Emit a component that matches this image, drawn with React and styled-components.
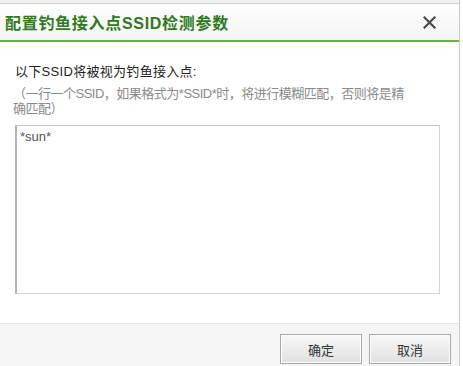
import React from "react";
import styled, { createGlobalStyle } from "styled-components";

const GlobalStyle = createGlobalStyle`
  html, body {
    margin: 0;
    padding: 0;
    background: #fff;
  }
  body {
    font-family: "Liberation Sans", "Noto Sans CJK SC", sans-serif;
  }
`;

const Dialog = styled.div`
  width: 460px;
  height: 366px;
  border-right: 1px solid #c9c9c9;
  display: flex;
  flex-direction: column;
  background: #fff;
  box-sizing: border-box;
`;

const TopStrip = styled.div`
  height: 3px;
  background: #f4f1f1;
  border-bottom: 1px solid #d2d2d2;
`;

const Header = styled.div`
  height: 36px;
  display: flex;
  align-items: center;
  justify-content: space-between;
  padding: 0 23px 0 5px;
  background: linear-gradient(#ffffff, #f3f3f3);
  border-bottom: 2px solid #6cb23f;
`;

const Title = styled.h1`
  margin: 0;
  font-size: 16px;
  font-weight: bold;
  color: #2f7a1d;
  letter-spacing: 0.7px;
`;

const Close = styled.button`
  border: 0;
  background: none;
  padding: 0;
  width: 13px;
  height: 13px;
  display: flex;
  cursor: pointer;
`;

const Body = styled.div`
  flex: 1;
  padding: 22px 19px 0 15px;
  display: flex;
  flex-direction: column;
`;

const Label = styled.div`
  font-size: 13px;
  line-height: 16px;
  color: #222;
  margin-bottom: 6px;
  letter-spacing: 0.3px;
`;

const Hint = styled.div`
  font-size: 13px;
  line-height: 15px;
  color: #8a8a8a;
  margin-left: -2px;
  margin-bottom: 9px;
  letter-spacing: -0.5px;
`;

const Input = styled.textarea`
  height: 169px;
  box-sizing: border-box;
  resize: none;
  border: 1px solid #d6d6d6;
  border-left: 2px solid #b4b4b4;
  border-top-color: #c4c4c4;
  padding: 3px 3px;
  font-family: "Liberation Sans", "Noto Sans CJK SC", sans-serif;
  font-size: 13px;
  color: #555;
  outline: none;
`;

const Footer = styled.div`
  height: 43px;
  box-sizing: border-box;
  border-top: 1px solid #e4e4e4;
  background: #f5f5f5;
  display: flex;
  justify-content: flex-end;
  gap: 7px;
  padding: 10px 8px 0 0;
`;

const Button = styled.button`
  width: 82px;
  height: 30px;
  box-sizing: border-box;
  border: 1px solid #a8a8a8;
  box-shadow: inset 0 0 0 1px #fdfdfd;
  background: linear-gradient(#f8f8f8, #ececec 50%, #e0e0e0);
  font-family: "Liberation Sans", "Noto Sans CJK SC", sans-serif;
  font-size: 13px;
  color: #333;
  cursor: pointer;
`;

export default function App() {
  return (
    <>
      <GlobalStyle />
      <Dialog>
        <TopStrip />
        <Header>
          <Title>配置钓鱼接入点SSID检测参数</Title>
          <Close aria-label="关闭">
            <svg width="13" height="13" viewBox="0 0 13 13">
              <path
                d="M1.5 1.5 L11.5 11.5 M11.5 1.5 L1.5 11.5"
                stroke="#4a4a4a"
                strokeWidth="2.2"
                strokeLinecap="square"
              />
            </svg>
          </Close>
        </Header>
        <Body>
          <Label>以下SSID将被视为钓鱼接入点:</Label>
          <Hint>
            （一行一个SSID，如果格式为*SSID*时，将进行模糊匹配，否则将是精
            <br />
            确匹配）
          </Hint>
          <Input defaultValue="*sun*" />
        </Body>
        <Footer>
          <Button>确定</Button>
          <Button>取消</Button>
        </Footer>
      </Dialog>
    </>
  );
}
